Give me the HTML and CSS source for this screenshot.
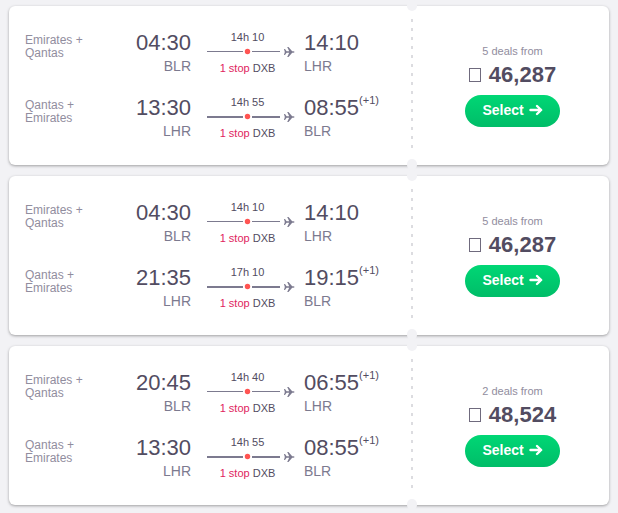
FILE: index.html
```
<!DOCTYPE html>
<html lang="en">
<head>
<meta charset="utf-8">
<title>Flight results</title>
<link rel="stylesheet" href="styles.css">
</head>
<body>
<svg class="defs" width="0" height="0">
  <symbol id="route-thin" viewBox="0 0 88 12">
    <path fill="#7c7a8f" d="M0 5h36v1H0zM45 5h28v1H45z"/>
    <circle cx="40.500" cy="5.500" r="2.700" fill="#ff5452"/>
    <use href="#plane"/>
  </symbol>
  <symbol id="route-thick" viewBox="0 0 88 12">
    <path fill="#7c7a8f" d="M0 5h36v2H0zM45 5h28v2H45z"/>
    <circle cx="40.500" cy="5.500" r="2.700" fill="#ff5452"/>
    <use href="#plane"/>
  </symbol>
  <symbol id="plane">
    <path fill="#7c7a8f" d="M77 3h1l1.600 2.200h2.600L80.200 1h1.300l3.700 4.200H86.300Q87.500 5.300 87.500 6T86.300 6.800H85.200L81.500 11H80.200l2-4.200H79.600L78 9H77l.8-3z"/>
  </symbol>
  <symbol id="arrow" viewBox="0 0 14 12">
    <path fill="none" stroke="#fff" stroke-width="2.400" stroke-linecap="round" stroke-linejoin="round" d="M1.500 6H12M8 2l4.200 4L8 10"/>
  </symbol>
</svg>
<main class="results">
  <article class="card">
    <div class="legs">
      <section class="leg">
        <p class="airline">Emirates + Qantas</p>
        <div class="point depart"><div class="time">04:30</div><div class="code">BLR</div></div>
        <div class="route"><div class="note">14h 10</div><svg class="line"><use href="#route-thin"/></svg><div class="note"><span class="stop">1 stop</span> DXB</div></div>
        <div class="point"><div class="time">14:10</div><div class="code">LHR</div></div>
      </section>
      <section class="leg">
        <p class="airline">Qantas + Emirates</p>
        <div class="point depart"><div class="time">13:30</div><div class="code">LHR</div></div>
        <div class="route"><div class="note">14h 55</div><svg class="line"><use href="#route-thick"/></svg><div class="note"><span class="stop">1 stop</span> DXB</div></div>
        <div class="point"><div class="time">08:55<sup>(+1)</sup></div><div class="code">BLR</div></div>
      </section>
    </div>
    <div class="tear"></div>
    <div class="offer">
      <div class="deals">5 deals from</div>
      <div class="price"><span class="currency"></span>46,287</div>
      <button class="select" type="button">Select<svg class="arrow"><use href="#arrow"/></svg></button>
    </div>
  </article>
  <article class="card">
    <div class="legs">
      <section class="leg">
        <p class="airline">Emirates + Qantas</p>
        <div class="point depart"><div class="time">04:30</div><div class="code">BLR</div></div>
        <div class="route"><div class="note">14h 10</div><svg class="line"><use href="#route-thin"/></svg><div class="note"><span class="stop">1 stop</span> DXB</div></div>
        <div class="point"><div class="time">14:10</div><div class="code">LHR</div></div>
      </section>
      <section class="leg">
        <p class="airline">Qantas + Emirates</p>
        <div class="point depart"><div class="time">21:35</div><div class="code">LHR</div></div>
        <div class="route"><div class="note">17h 10</div><svg class="line"><use href="#route-thick"/></svg><div class="note"><span class="stop">1 stop</span> DXB</div></div>
        <div class="point"><div class="time">19:15<sup>(+1)</sup></div><div class="code">BLR</div></div>
      </section>
    </div>
    <div class="tear"></div>
    <div class="offer">
      <div class="deals">5 deals from</div>
      <div class="price"><span class="currency"></span>46,287</div>
      <button class="select" type="button">Select<svg class="arrow"><use href="#arrow"/></svg></button>
    </div>
  </article>
  <article class="card">
    <div class="legs">
      <section class="leg">
        <p class="airline">Emirates + Qantas</p>
        <div class="point depart"><div class="time">20:45</div><div class="code">BLR</div></div>
        <div class="route"><div class="note">14h 40</div><svg class="line"><use href="#route-thin"/></svg><div class="note"><span class="stop">1 stop</span> DXB</div></div>
        <div class="point"><div class="time">06:55<sup>(+1)</sup></div><div class="code">LHR</div></div>
      </section>
      <section class="leg">
        <p class="airline">Qantas + Emirates</p>
        <div class="point depart"><div class="time">13:30</div><div class="code">LHR</div></div>
        <div class="route"><div class="note">14h 55</div><svg class="line"><use href="#route-thick"/></svg><div class="note"><span class="stop">1 stop</span> DXB</div></div>
        <div class="point"><div class="time">08:55<sup>(+1)</sup></div><div class="code">BLR</div></div>
      </section>
    </div>
    <div class="tear"></div>
    <div class="offer">
      <div class="deals">2 deals from</div>
      <div class="price"><span class="currency"></span>48,524</div>
      <button class="select" type="button">Select<svg class="arrow"><use href="#arrow"/></svg></button>
    </div>
  </article>
</main>
</body>
</html>
```
FILE: styles.css
```
* { box-sizing: border-box; }
body {
  margin: 0;
  background: #f2f2f5;
  color: #524c61;
  font-family: "Liberation Sans", Arial, sans-serif;
}
.defs { position: absolute; }
.results {
  display: flex;
  flex-direction: column;
  gap: 11px;
  padding: 6px 9px;
}
.card {
  display: flex;
  background: #fff;
  border-radius: 6px;
  box-shadow: 0 1px 3px rgba(0, 0, 0, 0.35);
}
.legs {
  flex: 1;
  display: flex;
  flex-direction: column;
  gap: 19px;
  padding: 24px 16px;
}
.leg {
  display: grid;
  grid-template-columns: 1fr 62px 97px 87px;
  column-gap: 8px;
}
.airline {
  margin: 0;
  padding-top: 4px;
  max-width: 64px;
  color: #918d9e;
  font-size: 12px;
  line-height: 13px;
}
.depart { text-align: right; }
.time {
  font-size: 22px;
  line-height: 26px;
  white-space: nowrap;
}
.time sup {
  font-size: 11px;
  line-height: 11px;
  vertical-align: top;
}
.code {
  color: #7c7a8f;
  font-size: 14px;
  line-height: 20px;
}
.route {
  display: flex;
  flex-direction: column;
  padding-left: 8px;
}
.note {
  padding-right: 8px;
  font-size: 11px;
  line-height: 15px;
  text-align: center;
}
.stop { color: #e0245e; }
.line {
  width: 88px;
  height: 12px;
  margin: 1px 0 3px;
}
.tear {
  position: relative;
  width: 10px;
  background: repeating-linear-gradient(#dcdce0 0 3px, transparent 3px 9px) center 13px / 2px 130px no-repeat;
}
.tear::before,
.tear::after {
  content: "";
  position: absolute;
  left: 0;
  width: 10px;
  height: 11px;
  border-radius: 5px;
  background: #f2f2f5;
}
.tear::before { top: -6px; }
.tear::after { bottom: -5px; }
.offer {
  display: flex;
  flex-direction: column;
  align-items: center;
  width: 192px;
  padding: 37px 1px 0 0;
}
.deals {
  color: #918d9e;
  font-size: 11px;
  line-height: 16px;
}
.price {
  display: flex;
  align-items: center;
  gap: 8px;
  font-size: 22px;
  font-weight: bold;
  line-height: 32px;
}
.currency {
  width: 12px;
  height: 14px;
  border: 1px solid #6f6a7d;
}
.select {
  display: flex;
  align-items: center;
  justify-content: center;
  gap: 5px;
  width: 95px;
  height: 32px;
  margin-top: 4px;
  padding: 0 0 2px;
  border: 0;
  border-radius: 16px;
  background: linear-gradient(#00d775, #00bd68);
  color: #fff;
  font-family: inherit;
  font-size: 14px;
  font-weight: bold;
}
.arrow {
  width: 14px;
  height: 12px;
}
```
